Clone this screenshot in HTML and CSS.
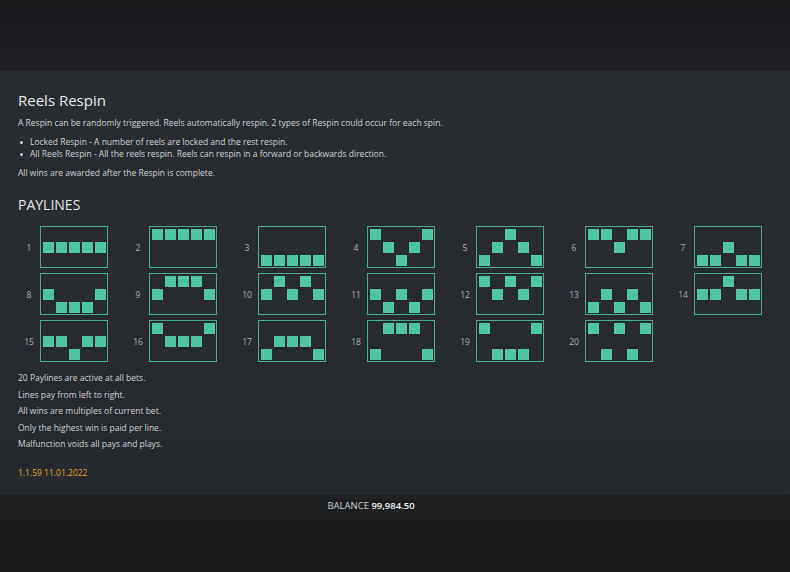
FILE: index.html
```html
<!DOCTYPE html>
<html lang="en">
<head>
    <meta charset="UTF-8">
    <meta name="viewport" content="width=device-width, initial-scale=1.0">
    <title>Game Rules</title>
    <link rel="stylesheet" href="styles.css">
</head>
<body>
    <div class="top-band"></div>

    <div class="panel">
        <h1 class="title">Reels Respin</h1>
        <p class="text">A Respin can be randomly triggered. Reels automatically respin. 2 types of Respin could occur for each spin.</p>
        <ul class="list">
            <li>Locked Respin - A number of reels are locked and the rest respin.</li>
            <li>All Reels Respin - All the reels respin. Reels can respin in a forward or backwards direction.</li>
        </ul>
        <p class="text">All wins are awarded after the Respin is complete.</p>

        <h2 class="heading">PAYLINES</h2>
        <div class="paylines" id="paylines"></div>

        <div class="rules">
            <p>20 Paylines are active at all bets.</p>
            <p>Lines pay from left to right.</p>
            <p>All wins are multiples of current bet.</p>
            <p>Only the highest win is paid per line.</p>
            <p>Malfunction voids all pays and plays.</p>
        </div>

        <div class="version">1.1.59 11.01.2022</div>
    </div>

    <div class="balance-bar">
        <span class="balance-label">BALANCE</span> <span class="balance-value">99,984.50</span>
    </div>
    <div class="bottom"></div>

    <script>
        // row index per reel: 0 top, 1 middle, 2 bottom
        const lines = [
            [1, 1, 1, 1, 1], [0, 0, 0, 0, 0], [2, 2, 2, 2, 2], [0, 1, 2, 1, 0],
            [2, 1, 0, 1, 2], [0, 0, 1, 0, 0], [2, 2, 1, 2, 2], [1, 2, 2, 2, 1],
            [1, 0, 0, 0, 1], [1, 0, 1, 0, 1], [1, 2, 1, 2, 1], [0, 1, 0, 1, 0],
            [2, 1, 2, 1, 2], [1, 1, 0, 1, 1], [1, 1, 2, 1, 1], [0, 1, 1, 1, 0],
            [2, 1, 1, 1, 2], [2, 0, 0, 0, 2], [0, 2, 2, 2, 0], [0, 2, 0, 2, 0]
        ];

        const container = document.getElementById('paylines');

        lines.forEach((rows, i) => {
            const item = document.createElement('div');
            item.className = 'payline';

            const num = document.createElement('span');
            num.className = 'payline-num';
            num.textContent = i + 1;
            item.appendChild(num);

            const box = document.createElement('div');
            box.className = 'payline-box';
            rows.forEach((row, col) => {
                const cell = document.createElement('div');
                cell.className = 'cell';
                cell.style.gridColumn = col + 1;
                cell.style.gridRow = row + 1;
                box.appendChild(cell);
            });
            item.appendChild(box);

            container.appendChild(item);
        });
    </script>
</body>
</html>
```

FILE: styles.css
```css
* {
    margin: 0;
    padding: 0;
    box-sizing: border-box;
}

body {
    background-color: #1c1d1f;
    font-family: 'Open Sans', 'Liberation Sans', sans-serif;
    color: #cfd1d3;
    width: 790px;
    height: 572px;
    overflow: hidden;
}

.top-band {
    height: 71px;
    background: linear-gradient(to bottom, #1a1b1d, #212225);
}

.panel {
    height: 424px;
    background: linear-gradient(to bottom, #292d32, #262a2f);
    padding: 19px 18px 0 18px;
}

.title {
    font-size: 15px;
    font-weight: 400;
    line-height: 20px;
    color: #e6e7e8;
    margin-bottom: 7px;
}

.text {
    font-size: 8.5px;
    line-height: 12px;
}

.list {
    list-style: none;
    margin: 7px 0;
}

.list li {
    font-size: 8.5px;
    line-height: 12px;
    position: relative;
    padding-left: 12px;
}

.list li::before {
    content: '';
    position: absolute;
    left: 2px;
    top: 5px;
    width: 3px;
    height: 3px;
    border-radius: 50%;
    background: #cfd1d3;
}

.heading {
    font-size: 14px;
    font-weight: 400;
    line-height: 18px;
    color: #e6e7e8;
    margin-top: 17px;
    margin-bottom: 12px;
}

.paylines {
    display: grid;
    grid-template-columns: repeat(7, 90px);
    column-gap: 19px;
    row-gap: 5px;
}

.payline {
    display: flex;
    align-items: center;
}

.payline-num {
    width: 22px;
    text-align: center;
    font-size: 8.5px;
    color: #a9abae;
}

.payline-box {
    width: 68px;
    height: 42px;
    border: 1.5px solid #46ab8b;
    display: grid;
    grid-template-columns: repeat(5, 11px);
    grid-template-rows: repeat(3, 11px);
    gap: 2px;
    justify-content: center;
    align-content: center;
}

.cell {
    background-color: #4fc6a1;
}

.rules {
    margin-top: 8px;
}

.rules p {
    font-size: 8.5px;
    line-height: 16.5px;
}

.version {
    margin-top: 14px;
    font-size: 8.5px;
    line-height: 12px;
    color: #e3a033;
}

.balance-bar {
    height: 26px;
    background-color: #1f2022;
    text-align: center;
    font-size: 9.5px;
    line-height: 21px;
    padding-right: 48px;
}

.balance-label {
    color: #c9cbcd;
}

.balance-value {
    color: #eceded;
    font-weight: 600;
}

.bottom {
    height: 51px;
    background-color: #1c1d1f;
}
```
